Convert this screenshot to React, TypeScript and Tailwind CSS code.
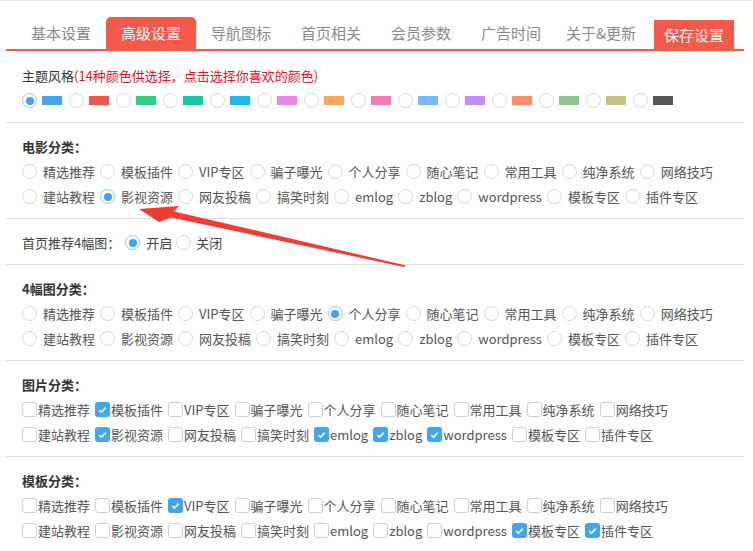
import React from "react";

const TABS = ["基本设置", "高级设置", "导航图标", "首页相关", "会员参数", "广告时间", "关于&更新"];

const SWATCHES = [
  "#43a5f0",
  "#f2554a",
  "#2fd07f",
  "#14c9a0",
  "#1cb9ef",
  "#ec85ec",
  "#ffa55e",
  "#f57db4",
  "#77b7fb",
  "#c58bf9",
  "#ff8c66",
  "#8ec78f",
  "#c6c087",
  "#555555",
];

const CATS = [
  ["精选推荐", "模板插件", "VIP专区", "骗子曝光", "个人分享", "随心笔记", "常用工具", "纯净系统", "网络技巧"],
  ["建站教程", "影视资源", "网友投稿", "搞笑时刻", "emlog", "zblog", "wordpress", "模板专区", "插件专区"],
];

const Radio = ({ on }: { on?: boolean }) => (
  <span
    className={
      on
        ? "flex items-center justify-center w-[15px] h-[15px] rounded-full border border-[#8ec8f2] bg-white shrink-0"
        : "w-[15px] h-[15px] rounded-full border border-[#d8d8d8] bg-white shrink-0"
    }
  >
    {on && <span className="w-[8px] h-[8px] rounded-full bg-[#3ea3ee]" />}
  </span>
);

const Check = ({ on }: { on?: boolean }) =>
  on ? (
    <span className="flex items-center justify-center w-[15px] h-[15px] rounded-[3px] bg-[#3ea6f2] shrink-0">
      <svg width="9" height="8" viewBox="0 0 9 8">
        <path d="M1.3 4.2 L3.5 6.2 L7.7 1.6" fill="none" stroke="white" strokeWidth="1.6" />
      </svg>
    </span>
  ) : (
    <span className="w-[15px] h-[15px] rounded-[3px] border border-[#cfcfcf] bg-white shrink-0" />
  );

const Section = ({ children, first }: { children: React.ReactNode; first?: boolean }) => (
  <div className={first ? "px-[16px] pt-[12px] pb-[9px] border-b border-[#dedede]" : "px-[16px] pt-[11px] pb-[9px] border-b border-[#dedede]"}>
    {children}
  </div>
);

const RadioGroup = ({ title, checked }: { title: string; checked: string }) => (
  <Section>
    <div className="h-[25px] leading-[25px] font-bold text-[#333]">{title}</div>
    {CATS.map((row, i) => (
      <div key={i} className="h-[25px] flex items-center">
        {row.map((c) => (
          <div key={c} className="flex items-center mr-[5px]">
            <Radio on={c === checked} />
            <span className="ml-[6px] text-[#555]">{c}</span>
          </div>
        ))}
      </div>
    ))}
  </Section>
);

const CheckGroup = ({ title, checked }: { title: string; checked: string[] }) => (
  <Section>
    <div className="h-[25px] leading-[25px] font-bold text-[#333]">{title}</div>
    {CATS.map((row, i) => (
      <div key={i} className="h-[25px] flex items-center">
        {row.map((c) => (
          <div key={c} className="flex items-center mr-[5px]">
            <Check on={checked.includes(c)} />
            <span className="ml-[1px] text-[#555]">{c}</span>
          </div>
        ))}
      </div>
    ))}
  </Section>
);

export default function App() {
  return (
    <div className="relative w-[753px] h-[551px] overflow-hidden bg-white border-t border-[#e6e6e6] font-['Noto_Sans_CJK_SC',sans-serif] text-[13px]">
      <div className="ml-[6px] w-[738px]">
        <div className="flex items-end pl-[10px] pt-[16px] border-b-2 border-[#f4594a]">
          {TABS.map((t, i) => (
            <div
              key={t}
              className={
                i === 1
                  ? "w-[90px] h-[32px] leading-[32px] text-center text-[15px] text-white bg-[#f4594a] rounded-t-[5px]"
                  : "w-[90px] h-[32px] leading-[32px] text-center text-[15px] text-[#8a8a8a]"
              }
            >
              {t}
            </div>
          ))}
          <div className="ml-[8px] w-[80px] h-[29px] leading-[29px] text-center text-[15px] text-white bg-[#f4594a]">
            保存设置
          </div>
        </div>

        <Section first>
          <div className="h-[25px] leading-[25px] text-[#333]">
            主题风格<span className="text-[#e3141c]">(14种颜色供选择，点击选择你喜欢的颜色)</span>
          </div>
          <div className="h-[25px] flex items-center">
            {SWATCHES.map((c, i) => (
              <div key={c} className="flex items-center w-[47px]">
                <Radio on={i === 0} />
                <span className="ml-[5px] w-[20px] h-[9px]" style={{ backgroundColor: c }} />
              </div>
            ))}
          </div>
        </Section>

        <RadioGroup title="电影分类：" checked="影视资源" />

        <Section>
          <div className="h-[25px] flex items-center text-[#444]">
            <span className="mr-[5px]">首页推荐4幅图：</span>
            <Radio on />
            <span className="ml-[6px] mr-[4px]">开启</span>
            <Radio />
            <span className="ml-[5px]">关闭</span>
          </div>
        </Section>

        <RadioGroup title="4幅图分类：" checked="个人分享" />
        <CheckGroup title="图片分类：" checked={["模板插件", "影视资源", "emlog", "zblog", "wordpress"]} />
        <CheckGroup title="模板分类：" checked={["VIP专区", "模板专区", "插件专区"]} />
      </div>

      <svg className="absolute left-0 top-0 pointer-events-none" width="753" height="551">
        <polygon
          points="139,208 179,205 174,210.5 406,264.5 404,266 171,216.5 159,221"
          fill="#ef3d33"
        />
      </svg>
    </div>
  );
}
